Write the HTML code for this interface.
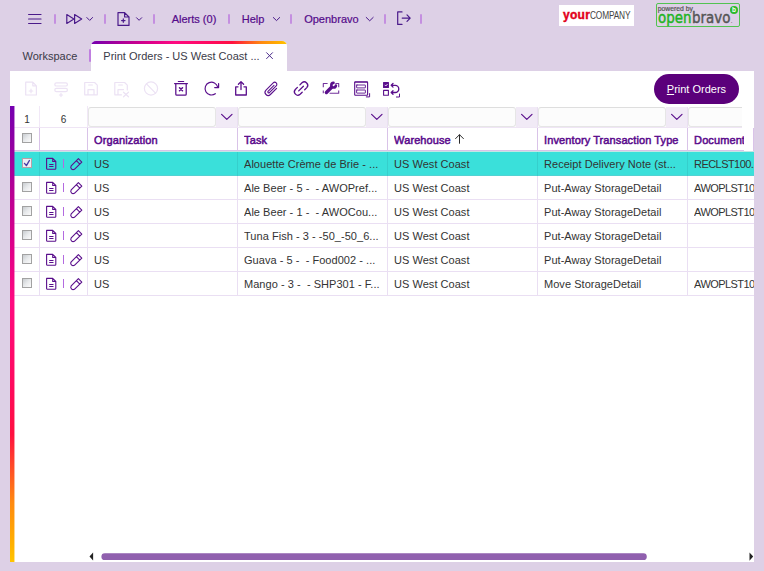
<!DOCTYPE html>
<html lang="en">
<head>
<meta charset="utf-8">
<title>Print Orders - US West Coast</title>
<style>
*{box-sizing:border-box;margin:0;padding:0}
html,body{width:764px;height:571px;overflow:hidden;background:#ddd0e6;font-family:"Liberation Sans",sans-serif;font-size:11px;color:#333}
div,span{position:absolute;white-space:pre}
svg{position:absolute;left:0;top:0;overflow:visible}
.t{line-height:14px;height:14px}
.sep{top:14px;width:2px;height:10px;background:#c48fe0;border-radius:1px}
.nt{top:12px;color:#540a8a;-webkit-text-stroke:0.2px #540a8a}
#tab{left:91px;top:41px;width:196px;height:30px;background:#fff;border-radius:5px 5px 0 0;overflow:hidden}
#tab i{position:absolute;left:0;top:0;right:0;height:3px;background:linear-gradient(90deg,#7400b0 0%,#9800a0 10%,#b80094 19%,#dc008a 30%,#ff0a80 43%,#ff0a5c 62%,#ff1040 72%,#ff4a28 79%,#ff8a10 87%,#ffb000 96%,#ffc400 100%)}
#panel{left:10px;top:71px;width:744px;height:491px;background:#fff;overflow:hidden}
#lbar{left:10px;top:106px;width:4px;height:456px;background:linear-gradient(180deg,#7400b0 0%,#9800a0 10%,#b80094 19%,#dc008a 30%,#ff0a80 43%,#ff0a5c 62%,#ff1040 72%,#ff4a28 79%,#ff8a10 87%,#ffb000 96%,#ffc400 100%)}
#lbar2{left:14px;top:106px;width:1px;height:456px;opacity:0.45;background:linear-gradient(180deg,#7400b0 0%,#9800a0 10%,#b80094 19%,#dc008a 30%,#ff0a80 43%,#ff0a5c 62%,#ff1040 72%,#ff4a28 79%,#ff8a10 87%,#ffb000 96%,#ffc400 100%)}
#btn{left:654px;top:74px;width:85px;height:30px;border-radius:15px;background:#5b007b}
.vl{width:1px;background:#eadff3}
.hl{height:1px;background:#eadff3;left:14px;width:740px}
.fin{top:107px;height:20px;background:#fcfcfc;border:1px solid #e6e6e6;border-top-color:#dedede;border-radius:3px}
.fbg{top:107px;height:20px;background:#f1eaf6}
.hd{top:133px;letter-spacing:0.1px;color:#5a0a8c;-webkit-text-stroke:0.5px #5a0a8c}
.cb{left:22px;width:10px;height:10px;border:1px solid #a2a2a2;background:linear-gradient(135deg,#c8ccd0 0%,#e8eaec 50%,#fbfbfb 100%)}
.rt{overflow:hidden;letter-spacing:0.04px}
.rs{left:63px;width:1px;height:9px;background:#b36ae0}
</style>
</head>
<body>
<div class="sep" style="left:54px"></div>
<div class="sep" style="left:104px"></div>
<div class="sep" style="left:153px"></div>
<div class="sep" style="left:228px"></div>
<div class="sep" style="left:290px"></div>
<div class="sep" style="left:384px"></div>
<div class="sep" style="left:420px"></div>
<div class="t nt" style="left:171.7px">Alerts (0)</div>
<div class="t nt" style="left:241.7px">Help</div>
<div class="t nt" style="left:304.2px">Openbravo</div>
<div class="t" style="left:22.5px;top:49px;color:#3a3a48">Workspace</div>
<div class="sep" style="left:89px;top:49px;height:13px;background:#c07fe0"></div>
<div id="tab"><i></i><div class="t" style="left:12.3px;top:8px;color:#3a3a48">Print Orders - US West Coast ...</div></div>
<div id="panel"></div>
<div id="lbar"></div>
<div id="btn"><div class="t" style="left:12.8px;top:8px;color:#fff"><u>P</u>rint Orders</div></div>
<div class="fbg" style="left:216px;width:21px"></div>
<div class="fbg" style="left:366px;width:21px"></div>
<div class="fbg" style="left:516px;width:21px"></div>
<div class="fbg" style="left:666px;width:21px"></div>
<div class="fin" style="left:88px;width:128px;"></div>
<div class="fin" style="left:238px;width:128px;"></div>
<div class="fin" style="left:388px;width:128px;"></div>
<div class="fin" style="left:538px;width:128px;"></div>
<div class="fin" style="left:688px;width:54px;border-right:0;border-radius:3px 0 0 3px;"></div>
<div class="t" style="left:15px;width:24px;top:113px;text-align:center;font-size:10px">1</div>
<div class="t" style="left:40px;width:47px;top:113px;text-align:center;font-size:10px">6</div>
<div class="hl" style="top:127px;width:728px;background:#efe5f5"></div>
<div class="hl" style="top:150px;width:730px;background:#d9c2e8"></div>
<div class="hl" style="top:151px;width:730px;background:#f0e8f6"></div>
<div class="vl" style="left:39px;top:106px;height:21px;background:#f1e8f7"></div>
<div class="vl" style="left:87px;top:106px;height:21px;background:#f1e8f7"></div>
<div class="vl" style="left:237px;top:107px;height:20px;background:#eadff2"></div>
<div class="vl" style="left:387px;top:107px;height:20px;background:#eadff2"></div>
<div class="vl" style="left:537px;top:107px;height:20px;background:#eadff2"></div>
<div class="vl" style="left:687px;top:107px;height:20px;background:#eadff2"></div>
<div class="vl" style="left:39px;top:128px;height:23px;background:#d9c3e8"></div>
<div class="vl" style="left:87px;top:128px;height:23px;background:#d9c3e8"></div>
<div class="vl" style="left:237px;top:128px;height:23px;background:#d9c3e8"></div>
<div class="vl" style="left:387px;top:128px;height:23px;background:#d9c3e8"></div>
<div class="vl" style="left:537px;top:128px;height:23px;background:#d9c3e8"></div>
<div class="vl" style="left:687px;top:128px;height:23px;background:#d9c3e8"></div>
<div class="vl" style="left:753px;top:128px;height:23px;background:#d9c3e8"></div>
<div class="vl" style="left:39px;top:176px;height:120px"></div>
<div class="vl" style="left:87px;top:176px;height:120px"></div>
<div class="vl" style="left:237px;top:176px;height:120px"></div>
<div class="vl" style="left:387px;top:176px;height:120px"></div>
<div class="vl" style="left:537px;top:176px;height:120px"></div>
<div class="vl" style="left:687px;top:176px;height:120px"></div>
<div class="cb" style="top:133px"></div>
<div class="t hd" style="left:94.1px;width:143px;overflow:hidden">Organization</div>
<div class="t hd" style="left:244.1px;width:143px;overflow:hidden">Task</div>
<div class="t hd" style="left:394.1px;width:143px;overflow:hidden">Warehouse</div>
<div class="t hd" style="left:544.1px;width:143px;overflow:hidden">Inventory Transaction Type</div>
<div class="t hd" style="left:694.1px;width:50px;overflow:hidden">Document No.</div>
<div style="left:14px;top:151px;width:740px;height:25px;background:#3ae0da;border-top:1px solid #c2e6e4;border-bottom:1px solid #52d2d2"></div>
<div class="vl" style="left:39px;top:152px;height:24px;background:#36cfcc"></div>
<div class="vl" style="left:87px;top:152px;height:24px;background:#36cfcc"></div>
<div class="vl" style="left:237px;top:152px;height:24px;background:#36cfcc"></div>
<div class="vl" style="left:387px;top:152px;height:24px;background:#36cfcc"></div>
<div class="vl" style="left:537px;top:152px;height:24px;background:#36cfcc"></div>
<div class="vl" style="left:687px;top:152px;height:24px;background:#36cfcc"></div>
<div class="cb" style="top:158px;border-color:#b8a0a8;background:#f0eef4"></div>
<div class="rs" style="top:159px"></div>
<div class="t rt" style="left:94px;top:157px;width:143px">US</div>
<div class="t rt" style="left:244px;top:157px;width:143px">Alouette Crème de Brie - ...</div>
<div class="t rt" style="left:394px;top:157px;width:143px">US West Coast</div>
<div class="t rt" style="left:544px;top:157px;width:143px">Receipt Delivery Note (st...</div>
<div class="t rt" style="left:694px;top:157px;width:60px;letter-spacing:-0.55px">RECLST100...</div>
<div class="hl" style="top:199px"></div>
<div class="cb" style="top:182px"></div>
<div class="rs" style="top:183px"></div>
<div class="t rt" style="left:94px;top:181px;width:143px">US</div>
<div class="t rt" style="left:244px;top:181px;width:143px">Ale Beer - 5 -  - AWOPref...</div>
<div class="t rt" style="left:394px;top:181px;width:143px">US West Coast</div>
<div class="t rt" style="left:544px;top:181px;width:143px">Put-Away StorageDetail</div>
<div class="t rt" style="left:694px;top:181px;width:60px;letter-spacing:-0.55px">AWOPLST100...</div>
<div class="hl" style="top:223px"></div>
<div class="cb" style="top:206px"></div>
<div class="rs" style="top:207px"></div>
<div class="t rt" style="left:94px;top:205px;width:143px">US</div>
<div class="t rt" style="left:244px;top:205px;width:143px">Ale Beer - 1 -  - AWOCou...</div>
<div class="t rt" style="left:394px;top:205px;width:143px">US West Coast</div>
<div class="t rt" style="left:544px;top:205px;width:143px">Put-Away StorageDetail</div>
<div class="t rt" style="left:694px;top:205px;width:60px;letter-spacing:-0.55px">AWOPLST100...</div>
<div class="hl" style="top:247px"></div>
<div class="cb" style="top:230px"></div>
<div class="rs" style="top:231px"></div>
<div class="t rt" style="left:94px;top:229px;width:143px">US</div>
<div class="t rt" style="left:244px;top:229px;width:143px">Tuna Fish - 3 - -50_-50_6...</div>
<div class="t rt" style="left:394px;top:229px;width:143px">US West Coast</div>
<div class="t rt" style="left:544px;top:229px;width:143px">Put-Away StorageDetail</div>
<div class="hl" style="top:271px"></div>
<div class="cb" style="top:254px"></div>
<div class="rs" style="top:255px"></div>
<div class="t rt" style="left:94px;top:253px;width:143px">US</div>
<div class="t rt" style="left:244px;top:253px;width:143px">Guava - 5 -  - Food002 - ...</div>
<div class="t rt" style="left:394px;top:253px;width:143px">US West Coast</div>
<div class="t rt" style="left:544px;top:253px;width:143px">Put-Away StorageDetail</div>
<div class="hl" style="top:295px"></div>
<div class="cb" style="top:278px"></div>
<div class="rs" style="top:279px"></div>
<div class="t rt" style="left:94px;top:277px;width:143px">US</div>
<div class="t rt" style="left:244px;top:277px;width:143px">Mango - 3 -  - SHP301 - F...</div>
<div class="t rt" style="left:394px;top:277px;width:143px">US West Coast</div>
<div class="t rt" style="left:544px;top:277px;width:143px">Move StorageDetail</div>
<div class="t rt" style="left:694px;top:277px;width:60px;letter-spacing:-0.55px">AWOPLST100...</div>
<div id="lbar2"></div>
<svg width="764" height="571" viewBox="0 0 764 571" fill="none" stroke-linecap="round" stroke-linejoin="round">
<g stroke="#4a1a8a" stroke-width="1.2">
<path d="M28.6 14.5H41M28.6 19H41M28.6 23.5H41"/>
<path d="M66.8 14.6L73.9 19L66.8 23.4ZM74.6 14.6L81.7 19L74.6 23.4Z"/>
<path d="M86.8 17.5L89.7 20.4L92.6 17.5" stroke-width="1"/>
<path d="M118 12.6H124.6L129 17V25.4H118ZM124.6 12.6V17H129M121.6 20.6H125M123.3 18.9V22.3"/>
<path d="M136.5 17.7L139.1 20.3L141.7 17.7" stroke-width="1"/>
<path d="M273.3 17.5L276.5 20.6L279.7 17.5" stroke-width="1"/>
<path d="M366.2 17.4L369.7 20.8L373.2 17.4" stroke-width="1"/>
<path d="M402 11.9H397.7V24.4H402M402.2 18.1H410.2M407 14.9L410.2 18.1L407 21.3"/>
</g>
<path d="M266.6 52.7L272.5 58.6M272.5 52.7L266.6 58.6" stroke="#4a2a8a" stroke-width="1"/>
<g stroke="#ece2f4" stroke-width="1.2">
<path d="M25.7 82.2H32.8L36.4 85.8V95H25.7ZM32.8 82.2V85.8H36.4M29.2 91H32.8M31 89.2V92.8"/>
<rect x="54.8" y="82.8" width="12.6" height="3.2" rx="1.6"/><rect x="54.8" y="88.4" width="12.6" height="3.2" rx="1.6"/><path d="M59.4 95H62.6M61 93.4V96.6"/>
<path d="M84.7 82.5H94.6L97.3 85.2V94.8H84.7ZM88 94.8V89.6H94V94.8M88.6 85H92.4"/>
<path d="M121.5 94.8H114.8V82.5H124.6L127.3 85.200V90M118 94.8V89.600H123.5M118.600 85H122.4M123.5 92.2L128.500 96.800M128.500 92.2L123.5 96.800"/>
<circle cx="151" cy="88.5" r="6.6"/><path d="M146.500 83.800L155.500 93.2"/>
</g>
<g stroke="#5a0f8c" stroke-width="1.3">
<path d="M178.3 81.5H183.700" stroke-width="1.1"/><path d="M174.600 83.600H187.4M175.800 83.600V94.2Q175.800 95.2 176.800 95.2H185.2Q186.2 95.2 186.2 94.2V83.600" stroke-width="1.25"/><path d="M179.500 87.700L182.500 90.700M182.500 87.700L179.500 90.700" stroke-width="1.5"/>
<path d="M215.3 93.7A6.4 6.4 0 1 1 217.7 87.1M218.6 83.6V87.6H214.7" stroke-width="1.2"/>
<path d="M238 86.800H235.700V95H246.300V86.800H244M241 89.600V81.800M238.400 84.200L241 81.600L243.600 84.200"/>
<path d="M276.600 88.300L270.400 94.500A3.100 3.100 0 0 1 266 90.100L273.200 82.900A2.100 2.100 0 0 1 276.200 85.900L269.400 92.700A1 1 0 0 1 268 91.300L274 85.300" stroke-width="1.1"/>
<path d="M299.9 84.9L302 82.8A3.4 3.4 0 0 1 306.8 87.6L304.7 89.7M302.2 92.2L300.1 94.3A3.4 3.4 0 0 1 295.3 89.5L297.4 87.4M298.7 90.9L303.4 86.2" transform="translate(0,0)"/>
</g>
<g stroke="#5a0f8c" stroke-width="1.1" stroke-linecap="butt"><path d="M327.6 83.5H323.3V87.2M335.4 83.5H338.7V87.2M323.3 90.4V93.3M338.7 90.4V93.3H329.6" opacity="0.85"/></g>
<path d="M326.4 92.5L331.6 87.3" stroke="#5a0f8c" stroke-width="3.4"/>
<path d="M333.5 82.9A2.3 2.3 0 1 0 335.9 85.5" stroke="#5a0f8c" stroke-width="2.6"/>
<g stroke="#5a0f8c"><rect x="354.7" y="81.8" width="12.9" height="13.5" rx="0.6" stroke-width="1.1"/><path d="M355 82.4H367.3" stroke-width="1.4" opacity="0.7"/><rect x="356.6" y="85" width="8.8" height="2.9" rx="0.3" stroke-width="0.9"/><rect x="356.6" y="90" width="8.8" height="3.1" rx="0.3" stroke-width="0.9"/><path d="M369.6 93.6V96.9H366.3" stroke-width="1"/></g>
<g stroke="#5a0f8c" stroke-width="1.1"><rect x="383.600" y="82.600" width="4.800" height="4.800" fill="#5a0f8c"/><rect x="383.600" y="90.400" width="4.800" height="4.800"/><path d="M391.400 85.300H395.200A3.600 3.600 0 0 1 395.200 92.500H391.400M393 83.500L391.200 85.300L393 87.100M393 90.700L391.200 92.500L393 94.300" stroke-width="1.300"/><path d="M399.500 94V97H396.400" stroke-width="1"/></g>
<path d="M384.900 85.100L385.800 86L387.300 84.300" stroke="#fff" stroke-width="0.800"/>
<path d="M459.5 143.3V134.8M455.6 138.6L459.5 134.7L463.4 138.6" stroke="#2a2a2a" stroke-width="1"/>
<path d="M221.60000000000002 114.400L226.8 119.400L232.0 114.400" stroke="#5a0f8c" stroke-width="1.2"/>
<path d="M371.6 114.400L376.8 119.400L382.0 114.400" stroke="#5a0f8c" stroke-width="1.2"/>
<path d="M521.5999999999999 114.400L526.8 119.400L532.0 114.400" stroke="#5a0f8c" stroke-width="1.2"/>
<path d="M671.5999999999999 114.400L676.8 119.400L682.0 114.400" stroke="#5a0f8c" stroke-width="1.2"/>
<g stroke="#5a0f8c" stroke-width="1.1" transform="translate(0,0)"><path d="M46.600 158.400H52.700L55.800 161.500V168.400Q55.800 169.200 55 169.200H47.400Q46.600 169.200 46.600 168.400ZM52.700 158.400V161.500H55.800"/><path d="M49.200 164.500H53.500M49.200 166.500H53.500" stroke-width="1" stroke-linecap="butt"/>
<path transform="translate(0.8,0.1)" d="M77.600 158.600L81 162L73.600 169.200A2.400 2.400 0 0 1 70.400 165.800ZM75.600 160.600L79 164" stroke-width="1.1"/></g>
<g stroke="#5a0f8c" stroke-width="1.1" transform="translate(0,24)"><path d="M46.600 158.400H52.700L55.800 161.500V168.400Q55.800 169.200 55 169.200H47.400Q46.600 169.200 46.600 168.400ZM52.700 158.400V161.500H55.800"/><path d="M49.200 164.500H53.500M49.200 166.500H53.500" stroke-width="1" stroke-linecap="butt"/>
<path transform="translate(0.8,0.1)" d="M77.600 158.600L81 162L73.600 169.200A2.400 2.400 0 0 1 70.400 165.800ZM75.600 160.600L79 164" stroke-width="1.1"/></g>
<g stroke="#5a0f8c" stroke-width="1.1" transform="translate(0,48)"><path d="M46.600 158.400H52.700L55.800 161.500V168.400Q55.800 169.200 55 169.200H47.400Q46.600 169.200 46.600 168.400ZM52.700 158.400V161.500H55.800"/><path d="M49.200 164.500H53.500M49.200 166.500H53.500" stroke-width="1" stroke-linecap="butt"/>
<path transform="translate(0.8,0.1)" d="M77.600 158.600L81 162L73.600 169.200A2.400 2.400 0 0 1 70.400 165.800ZM75.600 160.600L79 164" stroke-width="1.1"/></g>
<g stroke="#5a0f8c" stroke-width="1.1" transform="translate(0,72)"><path d="M46.600 158.400H52.700L55.800 161.500V168.400Q55.800 169.200 55 169.200H47.400Q46.600 169.200 46.600 168.400ZM52.700 158.400V161.500H55.800"/><path d="M49.200 164.500H53.500M49.200 166.500H53.500" stroke-width="1" stroke-linecap="butt"/>
<path transform="translate(0.8,0.1)" d="M77.600 158.600L81 162L73.600 169.200A2.400 2.400 0 0 1 70.400 165.800ZM75.600 160.600L79 164" stroke-width="1.1"/></g>
<g stroke="#5a0f8c" stroke-width="1.1" transform="translate(0,96)"><path d="M46.600 158.400H52.700L55.800 161.500V168.400Q55.800 169.200 55 169.200H47.400Q46.600 169.200 46.600 168.400ZM52.700 158.400V161.500H55.800"/><path d="M49.200 164.500H53.500M49.200 166.500H53.500" stroke-width="1" stroke-linecap="butt"/>
<path transform="translate(0.8,0.1)" d="M77.600 158.600L81 162L73.600 169.200A2.400 2.400 0 0 1 70.400 165.800ZM75.600 160.600L79 164" stroke-width="1.1"/></g>
<g stroke="#5a0f8c" stroke-width="1.1" transform="translate(0,120)"><path d="M46.600 158.400H52.700L55.800 161.500V168.400Q55.800 169.200 55 169.200H47.400Q46.600 169.200 46.600 168.400ZM52.700 158.400V161.500H55.800"/><path d="M49.200 164.500H53.500M49.200 166.500H53.500" stroke-width="1" stroke-linecap="butt"/>
<path transform="translate(0.8,0.1)" d="M77.600 158.600L81 162L73.600 169.200A2.400 2.400 0 0 1 70.400 165.800ZM75.600 160.600L79 164" stroke-width="1.1"/></g>
<path d="M24.500 163.400L26.400 165.600L29.400 160.500" stroke="#4a3ea6" stroke-width="1.4"/>
<rect x="101.4" y="553.2" width="545.4" height="6.9" rx="3.45" fill="#9060ae" stroke="none"/>
<path d="M93.1 552.600V560.600L89.500 556.600Z" fill="#222" stroke="none"/>
<path d="M749.500 552.500V560.700L753.200 556.600Z" fill="#222" stroke="none"/>
</svg>
<div style="left:559px;top:5px;width:75px;height:21px;background:#fff"><span style="left:4px;top:2.5px;line-height:14px;font-size:12px;font-weight:bold;color:#e2001a;letter-spacing:0.3px;-webkit-text-stroke:0.4px #e2001a">your</span><span style="left:30.5px;top:3.5px;line-height:14px;font-size:10.4px;color:#444;transform:scaleX(0.8);transform-origin:0 0;letter-spacing:-0.2px">COMPANY</span></div>
<div style="left:656px;top:3px;width:84px;height:24px;border:1px solid #52c352;border-radius:2px"><span style="left:0.8px;top:-0.5px;line-height:9px;font-size:6.8px;color:#555;-webkit-text-stroke:0.2px #555">powered by</span><span id="ob1" style="left:0.5px;top:5px;line-height:18px;font-family:'DejaVu Sans',sans-serif;font-size:15.5px;color:#22b422;-webkit-text-stroke:0.45px #22b422;transform:scaleX(0.865);transform-origin:0 0">open</span><span id="ob2" style="left:34.6px;top:5px;line-height:18px;font-family:'DejaVu Sans',sans-serif;font-size:15.5px;color:#555;-webkit-text-stroke:0.45px #555;transform:scaleX(0.865);transform-origin:0 0">bravo</span><span style="left:73.5px;top:9.5px;line-height:14px;font-size:8px;color:#777">.</span><span style="left:73px;top:2px;width:8px;height:8px;border-radius:4px;background:#2db92d;color:#fff;font-size:6.5px;line-height:8px;text-align:center;font-weight:bold">b</span></div>
</body>
</html>
